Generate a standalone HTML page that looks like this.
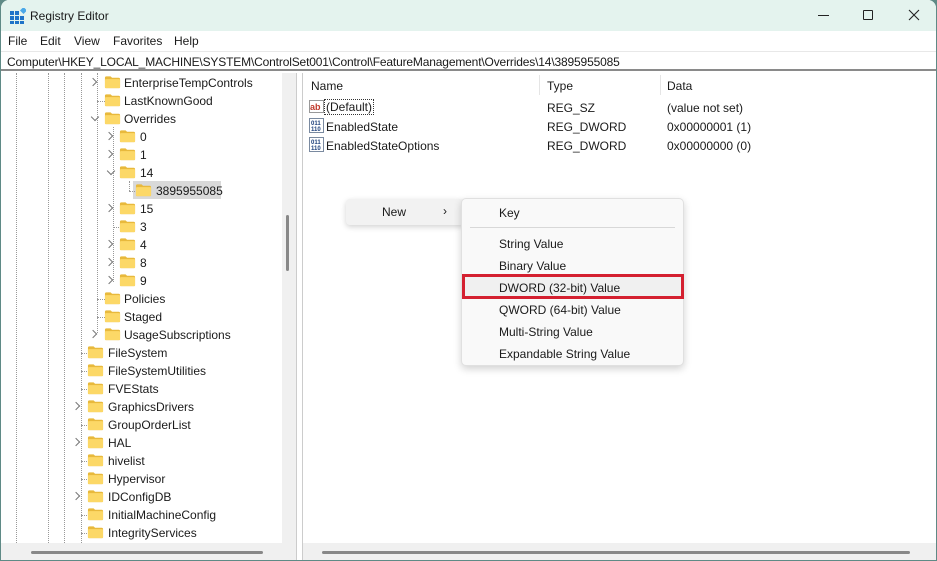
<!DOCTYPE html>
<html><head><meta charset="utf-8"><style>
*{margin:0;padding:0;box-sizing:border-box}
body{width:937px;height:561px;overflow:hidden;background:#5f8a86;font-family:"Liberation Sans",sans-serif;font-size:12px;color:#1a1a1a;position:relative}
.win{position:absolute;left:1px;top:0;width:935px;height:560px;background:#fff;border-radius:8px 8px 0 0;overflow:hidden}
.title{position:absolute;left:0;top:0;width:100%;height:31px;background:#e4f3ee}
.title .t{position:absolute;left:29px;top:9px;font-size:12px}
.menu{position:absolute;top:31px;left:0;width:100%;height:20px;background:#fff}
.menu span{position:absolute;top:3px}
.addr{position:absolute;top:51px;left:0;width:100%;height:20px;background:#fff;border-top:1px solid #e8e8e8;border-bottom:2px solid #8a8a8a}
.addr span{position:absolute;left:6px;top:3px;white-space:nowrap;letter-spacing:-0.16px}
.left{position:absolute;left:0;top:73px;width:296px;height:487px;background:#fff;border-right:1px solid #ccc}
.row{position:absolute;height:18px;line-height:18px;white-space:nowrap}
.chev{position:absolute;width:8px;height:8px;border-right:1px solid #777;border-bottom:1px solid #777}
.vl{position:absolute;border-left:1px dotted #999}
.hl{position:absolute;border-top:1px dotted #999;width:8px}
.right{position:absolute;left:301px;top:73px;width:634px;height:487px;background:#fff;border-left:1px solid #ccc}
.hdr{position:absolute;top:6px}
.sep{position:absolute;top:2px;width:1px;height:20px;background:#e5e5e5}
.cell{position:absolute;white-space:nowrap}
.menuA{position:absolute;left:345px;top:199px;width:118px;height:26px;background:#f2f2f2;border-radius:4px;box-shadow:0 2px 6px rgba(0,0,0,.18)}
.menuB{position:absolute;left:460px;top:198px;width:223px;height:168px;background:#f9f9f9;border:1px solid #e0e0e0;border-radius:5px;box-shadow:0 3px 8px rgba(0,0,0,.18)}
.mi{position:absolute;left:37px;white-space:nowrap}
.sb{position:absolute;background:#f0f0f0}
.f{position:absolute;width:17px;height:14px}
</style></head><body>
<div class="win">
<div class="title">
<svg style="position:absolute;left:9px;top:8px" width="16" height="16" viewBox="0 0 16 16"><g fill="#1e73c8"><rect x="0" y="3" width="4" height="4"/><rect x="5" y="3" width="4" height="4"/><rect x="0" y="8" width="4" height="4"/><rect x="5" y="8" width="4" height="4"/><rect x="10" y="8" width="4" height="4"/><rect x="0" y="13" width="4" height="3"/><rect x="5" y="13" width="4" height="3"/><rect x="10" y="13" width="4" height="3"/></g><rect x="11" y="0" width="5" height="5" fill="#4aa8e8" transform="rotate(45 13.5 2.5)"/></svg>
<span class="t">Registry Editor</span>
<div style="position:absolute;left:817px;top:15px;width:11px;height:1px;background:#222"></div>
<div style="position:absolute;left:862px;top:10px;width:10px;height:10px;border:1px solid #222;border-radius:1px"></div>
<svg style="position:absolute;left:907px;top:9px" width="12" height="12" viewBox="0 0 12 12"><path d="M1 1L11 11M11 1L1 11" stroke="#222" stroke-width="1.1"/></svg>
</div>
<div class="menu"><span style="left:7px">File</span><span style="left:39px">Edit</span><span style="left:73px">View</span><span style="left:112px">Favorites</span><span style="left:173px">Help</span></div>
<div class="addr"><span>Computer\HKEY_LOCAL_MACHINE\SYSTEM\ControlSet001\Control\FeatureManagement\Overrides\14\3895955085</span></div>

<div class="left">
<div class="vl" style="left:15px;top:0;height:470px"></div>
<div class="vl" style="left:47px;top:0;height:470px"></div>
<div class="vl" style="left:63px;top:0;height:470px"></div>
<div class="vl" style="left:80px;top:0;height:470px"></div>
<div class="vl" style="left:96px;top:0;height:260px"></div>
<div class="vl" style="left:112px;top:54px;height:155px"></div>
<div class="vl" style="left:128px;top:108px;height:10px"></div>
<div style="position:absolute;left:132px;top:108px;width:88px;height:18px;background:#d9d9d9"></div>
<div class="sb" style="left:281px;top:0;width:14px;height:470px"></div>
<div style="position:absolute;left:285px;top:142px;width:3px;height:56px;background:#888;border-radius:2px"></div>
<div class="sb" style="left:0;top:470px;width:295px;height:17px"></div>
<div style="position:absolute;left:30px;top:478px;width:232px;height:3px;background:#888;border-radius:2px"></div>
</div>

<div class="right">
<div class="hdr" style="left:8px">Name</div><div class="sep" style="left:236px"></div>
<div class="hdr" style="left:244px">Type</div><div class="sep" style="left:357px"></div>
<div class="hdr" style="left:364px">Data</div>
<svg style="position:absolute;left:6px;top:26px" width="15" height="15" viewBox="0 0 15 15"><rect x=".5" y="1.5" width="14" height="12" fill="#fff" stroke="#999"/><text x="1" y="11" font-size="9" font-family="Liberation Sans" font-weight="bold" fill="#c0392b">ab</text></svg>
<div class="cell" style="left:22px;top:27px;outline:1px dotted #333;padding:0 1px">(Default)</div>
<div class="cell" style="left:244px;top:28px">REG_SZ</div><div class="cell" style="left:364px;top:28px">(value not set)</div>
<svg style="position:absolute;left:6px;top:45px" width="15" height="15" viewBox="0 0 15 15"><rect x=".5" y=".5" width="14" height="14" fill="#fff" stroke="#7a8aa0"/><text x="2" y="7" font-size="6" font-family="Liberation Sans" font-weight="bold" fill="#1c3f7a">011</text><text x="2" y="13" font-size="6" font-family="Liberation Sans" font-weight="bold" fill="#1c3f7a">110</text></svg>
<div class="cell" style="left:23px;top:47px">EnabledState</div>
<div class="cell" style="left:244px;top:47px">REG_DWORD</div><div class="cell" style="left:364px;top:47px">0x00000001 (1)</div>
<svg style="position:absolute;left:6px;top:64px" width="15" height="15" viewBox="0 0 15 15"><rect x=".5" y=".5" width="14" height="14" fill="#fff" stroke="#7a8aa0"/><text x="2" y="7" font-size="6" font-family="Liberation Sans" font-weight="bold" fill="#1c3f7a">011</text><text x="2" y="13" font-size="6" font-family="Liberation Sans" font-weight="bold" fill="#1c3f7a">110</text></svg>
<div class="cell" style="left:23px;top:66px">EnabledStateOptions</div>
<div class="cell" style="left:244px;top:66px">REG_DWORD</div><div class="cell" style="left:364px;top:66px">0x00000000 (0)</div>
<div class="sb" style="left:0;top:470px;width:634px;height:17px"></div>
<div style="position:absolute;left:19px;top:478px;width:588px;height:3px;background:#888;border-radius:2px"></div>
</div>

<div class="menuA"><span style="position:absolute;left:36px;top:6px">New</span><span style="position:absolute;left:97px;top:5px">&#8250;</span></div>
<div class="menuB">
<div class="mi" style="top:7px">Key</div>
<div style="position:absolute;left:8px;top:28px;width:205px;height:1px;background:#d8d8d8"></div>
<div class="mi" style="top:38px">String Value</div>
<div class="mi" style="top:60px">Binary Value</div>
<div style="position:absolute;left:0;top:75px;width:222px;height:25px;border:3px solid #d42030;background:#f0f0f0"></div>
<div class="mi" style="top:82px">DWORD (32-bit) Value</div>
<div class="mi" style="top:104px">QWORD (64-bit) Value</div>
<div class="mi" style="top:126px">Multi-String Value</div>
<div class="mi" style="top:148px">Expandable String Value</div>
</div>
</div>

<div style="position:absolute;left:1px;top:73px">
<svg width="0" height="0" style="position:absolute"><defs><symbol id="fd" viewBox="0 0 18 14"><path d="M1 2.5Q1 1 2.5 1H7L8.5 2.5H15.5Q17 2.5 17 4V12.5Q17 13.5 16 13.5H2Q1 13.5 1 12.5Z" fill="#e8b93c"/><path d="M1 5Q1 4 2 4H16Q17 4 17 5V12.5Q17 13.5 16 13.5H2Q1 13.5 1 12.5Z" fill="#fcd867"/></symbol></defs></svg>
<svg class="f" style="left:103px;top:2px"><use href="#fd"/></svg><div class="row" style="left:123px;top:1px">EnterpriseTempControls</div><div class="chev" style="left:89px;top:6px;transform:rotate(-45deg);width:6px;height:6px"></div>
<svg class="f" style="left:103px;top:20px"><use href="#fd"/></svg><div class="row" style="left:123px;top:19px">LastKnownGood</div><div class="hl" style="left:96px;top:28px"></div>
<svg class="f" style="left:103px;top:38px"><use href="#fd"/></svg><div class="row" style="left:123px;top:37px">Overrides</div><div class="chev" style="left:91px;top:41px;transform:rotate(45deg);width:6px;height:6px"></div>
<svg class="f" style="left:118px;top:56px"><use href="#fd"/></svg><div class="row" style="left:139px;top:55px">0</div><div class="chev" style="left:105px;top:60px;transform:rotate(-45deg);width:6px;height:6px"></div>
<svg class="f" style="left:118px;top:74px"><use href="#fd"/></svg><div class="row" style="left:139px;top:73px">1</div><div class="chev" style="left:105px;top:78px;transform:rotate(-45deg);width:6px;height:6px"></div>
<svg class="f" style="left:118px;top:92px"><use href="#fd"/></svg><div class="row" style="left:139px;top:91px">14</div><div class="chev" style="left:107px;top:95px;transform:rotate(45deg);width:6px;height:6px"></div>
<svg class="f" style="left:134px;top:110px"><use href="#fd"/></svg><div class="row" style="left:155px;top:109px">3895955085</div><div class="hl" style="left:128px;top:118px;width:6px"></div>
<svg class="f" style="left:118px;top:128px"><use href="#fd"/></svg><div class="row" style="left:139px;top:127px">15</div><div class="chev" style="left:105px;top:132px;transform:rotate(-45deg);width:6px;height:6px"></div>
<svg class="f" style="left:118px;top:146px"><use href="#fd"/></svg><div class="row" style="left:139px;top:145px">3</div><div class="hl" style="left:112px;top:154px;width:6px"></div>
<svg class="f" style="left:118px;top:164px"><use href="#fd"/></svg><div class="row" style="left:139px;top:163px">4</div><div class="chev" style="left:105px;top:168px;transform:rotate(-45deg);width:6px;height:6px"></div>
<svg class="f" style="left:118px;top:182px"><use href="#fd"/></svg><div class="row" style="left:139px;top:181px">8</div><div class="chev" style="left:105px;top:186px;transform:rotate(-45deg);width:6px;height:6px"></div>
<svg class="f" style="left:118px;top:200px"><use href="#fd"/></svg><div class="row" style="left:139px;top:199px">9</div><div class="chev" style="left:105px;top:204px;transform:rotate(-45deg);width:6px;height:6px"></div>
<svg class="f" style="left:103px;top:218px"><use href="#fd"/></svg><div class="row" style="left:123px;top:217px">Policies</div><div class="hl" style="left:96px;top:226px"></div>
<svg class="f" style="left:103px;top:236px"><use href="#fd"/></svg><div class="row" style="left:123px;top:235px">Staged</div><div class="hl" style="left:96px;top:244px"></div>
<svg class="f" style="left:103px;top:254px"><use href="#fd"/></svg><div class="row" style="left:123px;top:253px">UsageSubscriptions</div><div class="chev" style="left:89px;top:258px;transform:rotate(-45deg);width:6px;height:6px"></div>
<svg class="f" style="left:86px;top:272px"><use href="#fd"/></svg><div class="row" style="left:107px;top:271px">FileSystem</div><div class="hl" style="left:80px;top:280px;width:6px"></div>
<svg class="f" style="left:86px;top:290px"><use href="#fd"/></svg><div class="row" style="left:107px;top:289px">FileSystemUtilities</div><div class="hl" style="left:80px;top:298px;width:6px"></div>
<svg class="f" style="left:86px;top:308px"><use href="#fd"/></svg><div class="row" style="left:107px;top:307px">FVEStats</div><div class="hl" style="left:80px;top:316px;width:6px"></div>
<svg class="f" style="left:86px;top:326px"><use href="#fd"/></svg><div class="row" style="left:107px;top:325px">GraphicsDrivers</div><div class="chev" style="left:72px;top:330px;transform:rotate(-45deg);width:6px;height:6px"></div>
<svg class="f" style="left:86px;top:344px"><use href="#fd"/></svg><div class="row" style="left:107px;top:343px">GroupOrderList</div><div class="hl" style="left:80px;top:352px;width:6px"></div>
<svg class="f" style="left:86px;top:362px"><use href="#fd"/></svg><div class="row" style="left:107px;top:361px">HAL</div><div class="chev" style="left:72px;top:366px;transform:rotate(-45deg);width:6px;height:6px"></div>
<svg class="f" style="left:86px;top:380px"><use href="#fd"/></svg><div class="row" style="left:107px;top:379px">hivelist</div><div class="hl" style="left:80px;top:388px;width:6px"></div>
<svg class="f" style="left:86px;top:398px"><use href="#fd"/></svg><div class="row" style="left:107px;top:397px">Hypervisor</div><div class="hl" style="left:80px;top:406px;width:6px"></div>
<svg class="f" style="left:86px;top:416px"><use href="#fd"/></svg><div class="row" style="left:107px;top:415px">IDConfigDB</div><div class="chev" style="left:72px;top:420px;transform:rotate(-45deg);width:6px;height:6px"></div>
<svg class="f" style="left:86px;top:434px"><use href="#fd"/></svg><div class="row" style="left:107px;top:433px">InitialMachineConfig</div><div class="hl" style="left:80px;top:442px;width:6px"></div>
<svg class="f" style="left:86px;top:452px"><use href="#fd"/></svg><div class="row" style="left:107px;top:451px">IntegrityServices</div><div class="hl" style="left:80px;top:460px;width:6px"></div>
</div>
</body></html>
